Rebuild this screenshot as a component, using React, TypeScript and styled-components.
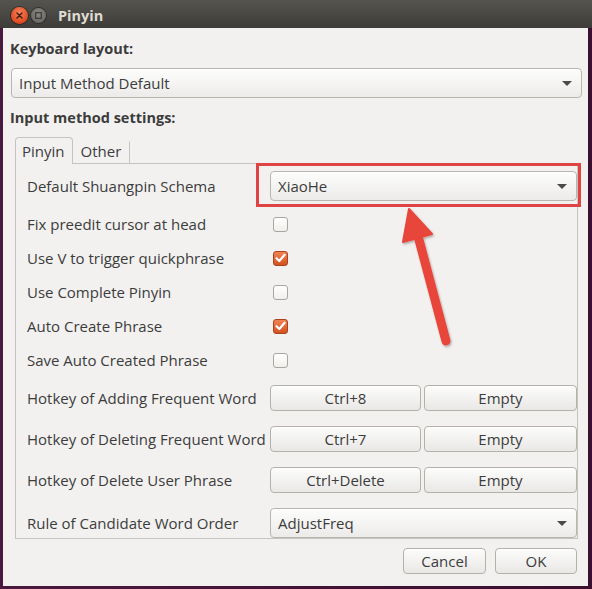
import React from "react";
import styled, { createGlobalStyle } from "styled-components";

const GlobalStyle = createGlobalStyle`
  html, body { margin: 0; padding: 0; width: 592px; height: 589px; overflow: hidden; background: #3e1233; }
  * { box-sizing: border-box; }
  #root { width: 592px; height: 589px; }
`;

const FONT = `"Open Sans", "Noto Sans", sans-serif`;

const Frame = styled.div`
  width: 592px;
  height: 589px;
  padding: 0 4px 3px 3px;
  background: linear-gradient(90deg, #4a1a3e, #3a0f30);
  display: flex;
`;

const Window = styled.div`
  position: relative;
  flex: 1;
  display: flex;
  flex-direction: column;
  font-family: ${FONT};
  color: #3c3c3c;
  font-size: 15px;
`;

const TitleBar = styled.div`
  height: 28px;
  margin-left: -3px;
  margin-right: -4px;
  background: linear-gradient(#55544f, #3d3c38);
  display: flex;
  align-items: center;
  padding: 2px 0 0 11px;
  gap: 3px;
`;

const WinButton = styled.div<{ $kind: "close" | "max" }>`
  width: ${(p) => (p.$kind === "close" ? 17 : 15)}px;
  height: ${(p) => (p.$kind === "close" ? 17 : 15)}px;
  border-radius: 50%;
  display: flex;
  align-items: center;
  justify-content: center;
  background: ${(p) =>
    p.$kind === "close"
      ? "radial-gradient(circle at 50% 35%, #f7845c, #e0491f 70%, #c23a16)"
      : "radial-gradient(circle at 50% 35%, #8a8984, #6b6a66 70%, #5a5955)"};
  box-shadow: 0 0 0 1px rgba(0, 0, 0, 0.35);
`;

const Title = styled.div`
  margin-left: 9px;
  font-weight: bold;
  font-size: 14.5px;
  color: #dfdbd2;
`;

const Body = styled.div`
  flex: 1;
  background: #f2f1f0;
  padding: 12px 6px 0 8px;
  display: flex;
  flex-direction: column;
`;

const Heading = styled.div<{ $top?: number }>`
  font-weight: bold;
  font-size: 14.5px;
  line-height: 18px;
  margin: ${(p) => p.$top ?? 0}px 0 0 -1px;
`;

const ComboBox = styled.div<{ $top?: number }>`
  height: 30px;
  margin-top: ${(p) => p.$top ?? 0}px;
  border: 1px solid #b9b6b0;
  border-radius: 4px;
  background: linear-gradient(#fdfdfc, #ecebe9);
  display: flex;
  align-items: center;
  padding: 0 9px 0 7px;
  justify-content: space-between;
  box-shadow: inset 0 1px 0 #ffffff;
`;

const ComboText = styled.span`
  font-size: 15px;
`;

const Caret = styled.span`
  width: 0;
  height: 0;
  border-left: 5px solid transparent;
  border-right: 5px solid transparent;
  border-top: 5px solid #4a4a4a;
`;

const TabBar = styled.div`
  margin: 9px 0 0 4px;
  height: 27px;
  display: flex;
  align-items: flex-end;
  position: relative;
  z-index: 1;
`;

const Tab = styled.div<{ $active?: boolean }>`
  height: ${(p) => (p.$active ? 27 : 22)}px;
  margin-bottom: ${(p) => (p.$active ? -1 : 0)}px;
  padding: ${(p) => (p.$active ? "0 7px 1px 6px" : "0 8px 3px 7px")};
  display: flex;
  align-items: center;
  font-size: 15px;
  background: #f2f1f0;
  border: 1px solid ${(p) => (p.$active ? "#c7c4bf" : "transparent")};
  border-right-color: #c7c4bf;
  border-bottom: none;
  border-radius: ${(p) => (p.$active ? "4px 4px 0 0" : "0")};
`;

const Panel = styled.div`
  margin: 0 4px;
  border: 1px solid #c7c4bf;
  padding: 0 0 0 11px;
  display: flex;
  flex-direction: column;
`;

const Row = styled.div<{ $h: number; $pt?: number }>`
  height: ${(p) => p.$h}px;
  padding-top: ${(p) => p.$pt ?? 0}px;
  display: grid;
  grid-template-columns: 243px 1fr;
  align-items: center;
`;

const Label = styled.div`
  font-size: 15px;
  white-space: nowrap;
  color: #3c3c3c;
`;

const CheckBox = styled.div<{ $checked?: boolean }>`
  width: 15px;
  height: 15px;
  margin-left: 3px;
  border-radius: 3px;
  border: 1px solid ${(p) => (p.$checked ? "#a8431a" : "#a9a6a1")};
  background: ${(p) =>
    p.$checked ? "linear-gradient(#f28255, #d4511f)" : "linear-gradient(#ffffff, #f0efed)"};
  display: flex;
  align-items: center;
  justify-content: center;
`;

const KeyPair = styled.div`
  display: grid;
  grid-template-columns: 151px 1fr;
  gap: 3px;
`;

const Button = styled.div<{ $w?: number }>`
  height: 26px;
  width: ${(p) => (p.$w ? `${p.$w}px` : "auto")};
  border: 1px solid #b4b1ab;
  border-radius: 4px;
  background: linear-gradient(#fcfcfb, #e9e8e6);
  display: flex;
  align-items: center;
  justify-content: center;
  font-size: 15px;
  box-shadow: inset 0 1px 0 #ffffff;
`;

const Footer = styled.div`
  margin-top: 9px;
  padding-right: 5px;
  display: flex;
  justify-content: flex-end;
  gap: 9px;
`;

const Highlight = styled.div`
  position: absolute;
  left: 253px;
  top: 163px;
  width: 325px;
  height: 44px;
  border: 3px solid #e04343;
  pointer-events: none;
`;

const ArrowLayer = styled.svg`
  position: absolute;
  left: -3px;
  top: 0;
  width: 592px;
  height: 589px;
  pointer-events: none;
`;

const Check = () => (
  <svg width="11" height="10" viewBox="0 0 11 10">
    <path d="M1.5 5.2 L4.3 8 L9.6 1.8" fill="none" stroke="#ffffff" strokeWidth="2.2" strokeLinecap="round" strokeLinejoin="round" />
  </svg>
);

const checks: [string, boolean][] = [
  ["Fix preedit cursor at head", false],
  ["Use V to trigger quickphrase", true],
  ["Use Complete Pinyin", false],
  ["Auto Create Phrase", true],
  ["Save Auto Created Phrase", false],
];

const hotkeys: [string, string][] = [
  ["Hotkey of Adding Frequent Word", "Ctrl+8"],
  ["Hotkey of Deleting Frequent Word", "Ctrl+7"],
  ["Hotkey of Delete User Phrase", "Ctrl+Delete"],
];

export default function App() {
  return (
    <>
      <GlobalStyle />
      <Frame>
        <Window>
          <TitleBar>
            <WinButton $kind="close">
              <svg width="7" height="7" viewBox="0 0 7 7">
                <path d="M1 1 L6 6 M6 1 L1 6" stroke="#3a1a10" strokeWidth="1.4" strokeLinecap="round" />
              </svg>
            </WinButton>
            <WinButton $kind="max">
              <svg width="7" height="7" viewBox="0 0 7 7">
                <rect x="0.7" y="0.7" width="5.6" height="5.6" fill="none" stroke="#3a3936" strokeWidth="1.2" />
              </svg>
            </WinButton>
            <Title>Pinyin</Title>
          </TitleBar>
          <Body>
            <Heading>Keyboard layout:</Heading>
            <ComboBox $top={10}>
              <ComboText>Input Method Default</ComboText>
              <Caret />
            </ComboBox>
            <Heading $top={11}>Input method settings:</Heading>
            <TabBar>
              <Tab $active>Pinyin</Tab>
              <Tab>Other</Tab>
            </TabBar>
            <Panel>
              <Row $h={43} $pt={1}>
                <Label>Default Shuangpin Schema</Label>
                <ComboBox>
                  <ComboText>XiaoHe</ComboText>
                  <Caret />
                </ComboBox>
              </Row>
              {checks.map(([label, on]) => (
                <Row $h={34} key={label}>
                  <Label>{label}</Label>
                  <CheckBox $checked={on}>{on && <Check />}</CheckBox>
                </Row>
              ))}
              {hotkeys.map(([label, key]) => (
                <Row $h={41} key={label}>
                  <Label>{label}</Label>
                  <KeyPair>
                    <Button>{key}</Button>
                    <Button>Empty</Button>
                  </KeyPair>
                </Row>
              ))}
              <Row $h={38} $pt={8}>
                <Label>Rule of Candidate Word Order</Label>
                <ComboBox>
                  <ComboText>AdjustFreq</ComboText>
                  <Caret />
                </ComboBox>
              </Row>
            </Panel>
            <Footer>
              <Button $w={83}>Cancel</Button>
              <Button $w={82}>OK</Button>
            </Footer>
          </Body>
          <Highlight />
          <ArrowLayer viewBox="0 0 592 589">
            <defs>
              <filter id="sh" x="-20%" y="-20%" width="140%" height="140%">
                <feDropShadow dx="1" dy="1.5" stdDeviation="1.2" floodColor="#000" floodOpacity="0.3" />
              </filter>
            </defs>
            <g filter="url(#sh)" fill="#e8443b" stroke="#e8443b">
              <line x1="446" y1="341" x2="418" y2="236" strokeWidth="9" strokeLinecap="round" />
              <polygon points="409,209 432,234 403,242" strokeWidth="2" strokeLinejoin="round" />
            </g>
          </ArrowLayer>
        </Window>
      </Frame>
    </>
  );
}
